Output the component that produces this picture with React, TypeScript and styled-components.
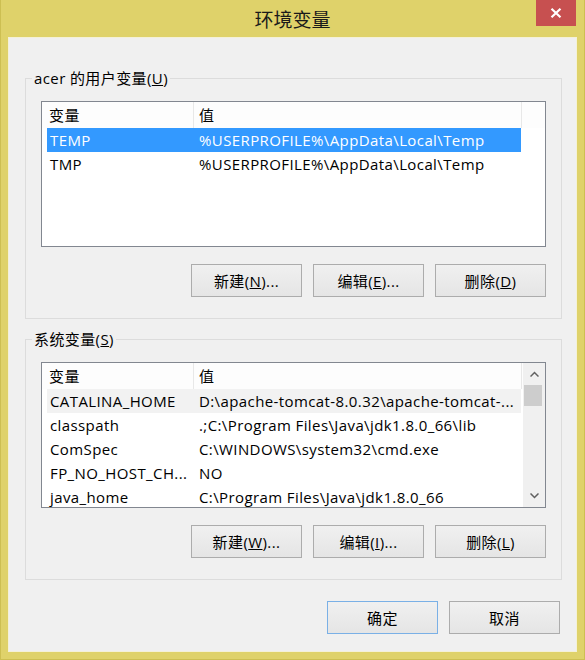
import React from "react";
import styled, { createGlobalStyle } from "styled-components";

const FONT = `"Open Sans", "Noto Sans CJK SC", sans-serif`;

const Global = createGlobalStyle`
  html, body { margin: 0; padding: 0; }
  body {
    width: 585px;
    height: 660px;
    overflow: hidden;
    background: #dfd26a;
    font-family: ${FONT};
    letter-spacing: 0.4px;
  }
`;

const Frame = styled.div`
  width: 585px;
  height: 660px;
  box-sizing: border-box;
  background: #dfd26a;
  border: 1px solid #cdbf52;
  border-top: none;
  padding: 0 7px 7px 7px;
  display: flex;
  flex-direction: column;
`;

const TitleBar = styled.div`
  height: 37px;
  flex-shrink: 0;
  display: grid;
  grid-template-columns: 1fr auto 1fr;
  align-items: start;
`;

const Title = styled.div`
  grid-column: 2;
  font-family: "Noto Sans CJK SC", sans-serif;
  font-size: 19px;
  line-height: 24px;
  letter-spacing: 0;
  padding-top: 7px;
  color: #1a1a1a;
`;

const CloseButton = styled.div`
  grid-column: 3;
  justify-self: end;
  width: 40px;
  height: 26px;
  margin-right: 1px;
  background: #c75050;
  display: flex;
  align-items: center;
  justify-content: center;
`;

const Client = styled.div`
  flex: 1;
  background: #f0f0f0;
  border: 1px solid #f4f1d8;
  padding: 30px 14px 0 16px;
  display: flex;
  flex-direction: column;
`;

const Group = styled.fieldset<{ $gap?: number }>`
  margin: ${(p) => p.$gap ?? 0}px 0 0 0;
  padding: 0;
  border: 1px solid #dcdcdc;
  min-width: 0;
`;

const GroupLabel = styled.legend`
  margin-left: 6px;
  padding: 0 2px;
  font-size: 15px;
  line-height: 20px;
  color: #000;
`;

const GroupBody = styled.div`
  padding: 13px 15px 21px 15px;
  display: flex;
  flex-direction: column;
`;

const ListView = styled.div`
  height: 146px;
  box-sizing: border-box;
  border: 1px solid #828790;
  background: #fff;
  display: flex;
  overflow: hidden;
`;

const ListMain = styled.div`
  flex: 1;
  min-width: 0;
  display: flex;
  flex-direction: column;
  overflow: hidden;
`;

const Header = styled.div`
  height: 26px;
  flex-shrink: 0;
  display: flex;
  background: #fdfdfd;
`;

const HeaderCell = styled.div<{ $w: number; $pad: number }>`
  width: ${(p) => p.$w}px;
  box-sizing: border-box;
  padding-left: ${(p) => p.$pad}px;
  border-right: 1px solid #e8e8e8;
  font-size: 15px;
  line-height: 26px;
  color: #000;
  white-space: nowrap;
`;

const Rows = styled.div`
  padding-left: 5px;
  display: flex;
  flex-direction: column;
`;

const Row = styled.div<{ $state?: "selected" | "hover" }>`
  width: 474px;
  height: 24px;
  flex-shrink: 0;
  display: flex;
  background: ${(p) =>
    p.$state === "selected" ? "#3399ff" : p.$state === "hover" ? "#f2f2f2" : "transparent"};
  color: ${(p) => (p.$state === "selected" ? "#fff" : "#000")};
`;

const Cell = styled.div<{ $w: number; $pad: number }>`
  width: ${(p) => p.$w}px;
  box-sizing: border-box;
  padding-left: ${(p) => p.$pad}px;
  font-size: 15px;
  line-height: 24px;
  white-space: nowrap;
  overflow: hidden;
`;

const ScrollBar = styled.div`
  width: 22px;
  flex-shrink: 0;
  background: #f0f0f0;
  display: flex;
  flex-direction: column;
`;

const ScrollArrow = styled.div`
  height: 22px;
  flex-shrink: 0;
  display: flex;
  align-items: center;
  justify-content: center;
`;

const ScrollThumb = styled.div`
  height: 21px;
  margin: 0 3px 0 1px;
  background: #cdcdcd;
  flex-shrink: 0;
`;

const ScrollTrack = styled.div`
  flex: 1;
`;

const ButtonRow = styled.div<{ $top: number }>`
  display: flex;
  justify-content: flex-end;
  gap: 11px;
  margin-top: ${(p) => p.$top}px;
`;

const Button = styled.div<{ $default?: boolean }>`
  width: 111px;
  height: 33px;
  box-sizing: border-box;
  border: 1px solid ${(p) => (p.$default ? "#7ab0e6" : "#acacac")};
  background: linear-gradient(#f0f0f0, #e5e5e5);
  font-size: 15px;
  color: #000;
  display: flex;
  align-items: center;
  justify-content: center;
  white-space: nowrap;
`;

const Actions = styled(ButtonRow)`
  padding-right: 2px;
`;

type Var = { name: string; value: string; state?: "selected" | "hover" };

const userVars: Var[] = [
  { name: "TEMP", value: "%USERPROFILE%\\AppData\\Local\\Temp", state: "selected" },
  { name: "TMP", value: "%USERPROFILE%\\AppData\\Local\\Temp" },
];

const sysVars: Var[] = [
  { name: "CATALINA_HOME", value: "D:\\apache-tomcat-8.0.32\\apache-tomcat-...", state: "hover" },
  { name: "classpath", value: ".;C:\\Program Files\\Java\\jdk1.8.0_66\\lib" },
  { name: "ComSpec", value: "C:\\WINDOWS\\system32\\cmd.exe" },
  { name: "FP_NO_HOST_CH...", value: "NO" },
  { name: "java_home", value: "C:\\Program Files\\Java\\jdk1.8.0_66" },
];

const Chevron = ({ up }: { up?: boolean }) => (
  <svg width="9" height="6" viewBox="0 0 9 6">
    <polyline
      points={up ? "0.5,5.5 4.5,1.5 8.5,5.5" : "0.5,0.5 4.5,4.5 8.5,0.5"}
      fill="none"
      stroke="#606060"
      strokeWidth="1.5"
    />
  </svg>
);

const VarList = ({ items, scroll }: { items: Var[]; scroll?: boolean }) => (
  <ListView>
    <ListMain>
      <Header>
        <HeaderCell $w={152} $pad={7}>变量</HeaderCell>
        <HeaderCell $w={328} $pad={5}>值</HeaderCell>
      </Header>
      <Rows>
        {items.map((v) => (
          <Row key={v.name} $state={v.state}>
            <Cell $w={146} $pad={3}>{v.name}</Cell>
            <Cell $w={328} $pad={6}>{v.value}</Cell>
          </Row>
        ))}
      </Rows>
    </ListMain>
    {scroll && (
      <ScrollBar>
        <ScrollArrow>
          <Chevron up />
        </ScrollArrow>
        <ScrollThumb />
        <ScrollTrack />
        <ScrollArrow>
          <Chevron />
        </ScrollArrow>
      </ScrollBar>
    )}
  </ListView>
);

const Mn = ({ pre, k, post }: { pre: string; k: string; post?: string }) => (
  <span>
    {pre}(<u>{k}</u>){post ?? ""}
  </span>
);

export default function App() {
  return (
    <>
      <Global />
      <Frame>
        <TitleBar>
          <Title>环境变量</Title>
          <CloseButton>
            <svg width="12" height="10" viewBox="0 0 12 10">
              <path d="M1.5 0.8 L10.5 9.2 M10.5 0.8 L1.5 9.2" stroke="#fff" strokeWidth="2.2" />
            </svg>
          </CloseButton>
        </TitleBar>
        <Client>
          <Group>
            <GroupLabel>
              <Mn pre="acer 的用户变量" k="U" />
            </GroupLabel>
            <GroupBody>
              <VarList items={userVars} />
              <ButtonRow $top={17}>
                <Button><Mn pre="新建" k="N" post="..." /></Button>
                <Button><Mn pre="编辑" k="E" post="..." /></Button>
                <Button><Mn pre="删除" k="D" /></Button>
              </ButtonRow>
            </GroupBody>
          </Group>
          <Group $gap={10}>
            <GroupLabel>
              <Mn pre="系统变量" k="S" />
            </GroupLabel>
            <GroupBody>
              <VarList items={sysVars} scroll />
              <ButtonRow $top={17}>
                <Button><Mn pre="新建" k="W" post="..." /></Button>
                <Button><Mn pre="编辑" k="I" post="..." /></Button>
                <Button><Mn pre="删除" k="L" /></Button>
              </ButtonRow>
            </GroupBody>
          </Group>
          <Actions $top={21}>
            <Button $default>确定</Button>
            <Button>取消</Button>
          </Actions>
        </Client>
      </Frame>
    </>
  );
}
